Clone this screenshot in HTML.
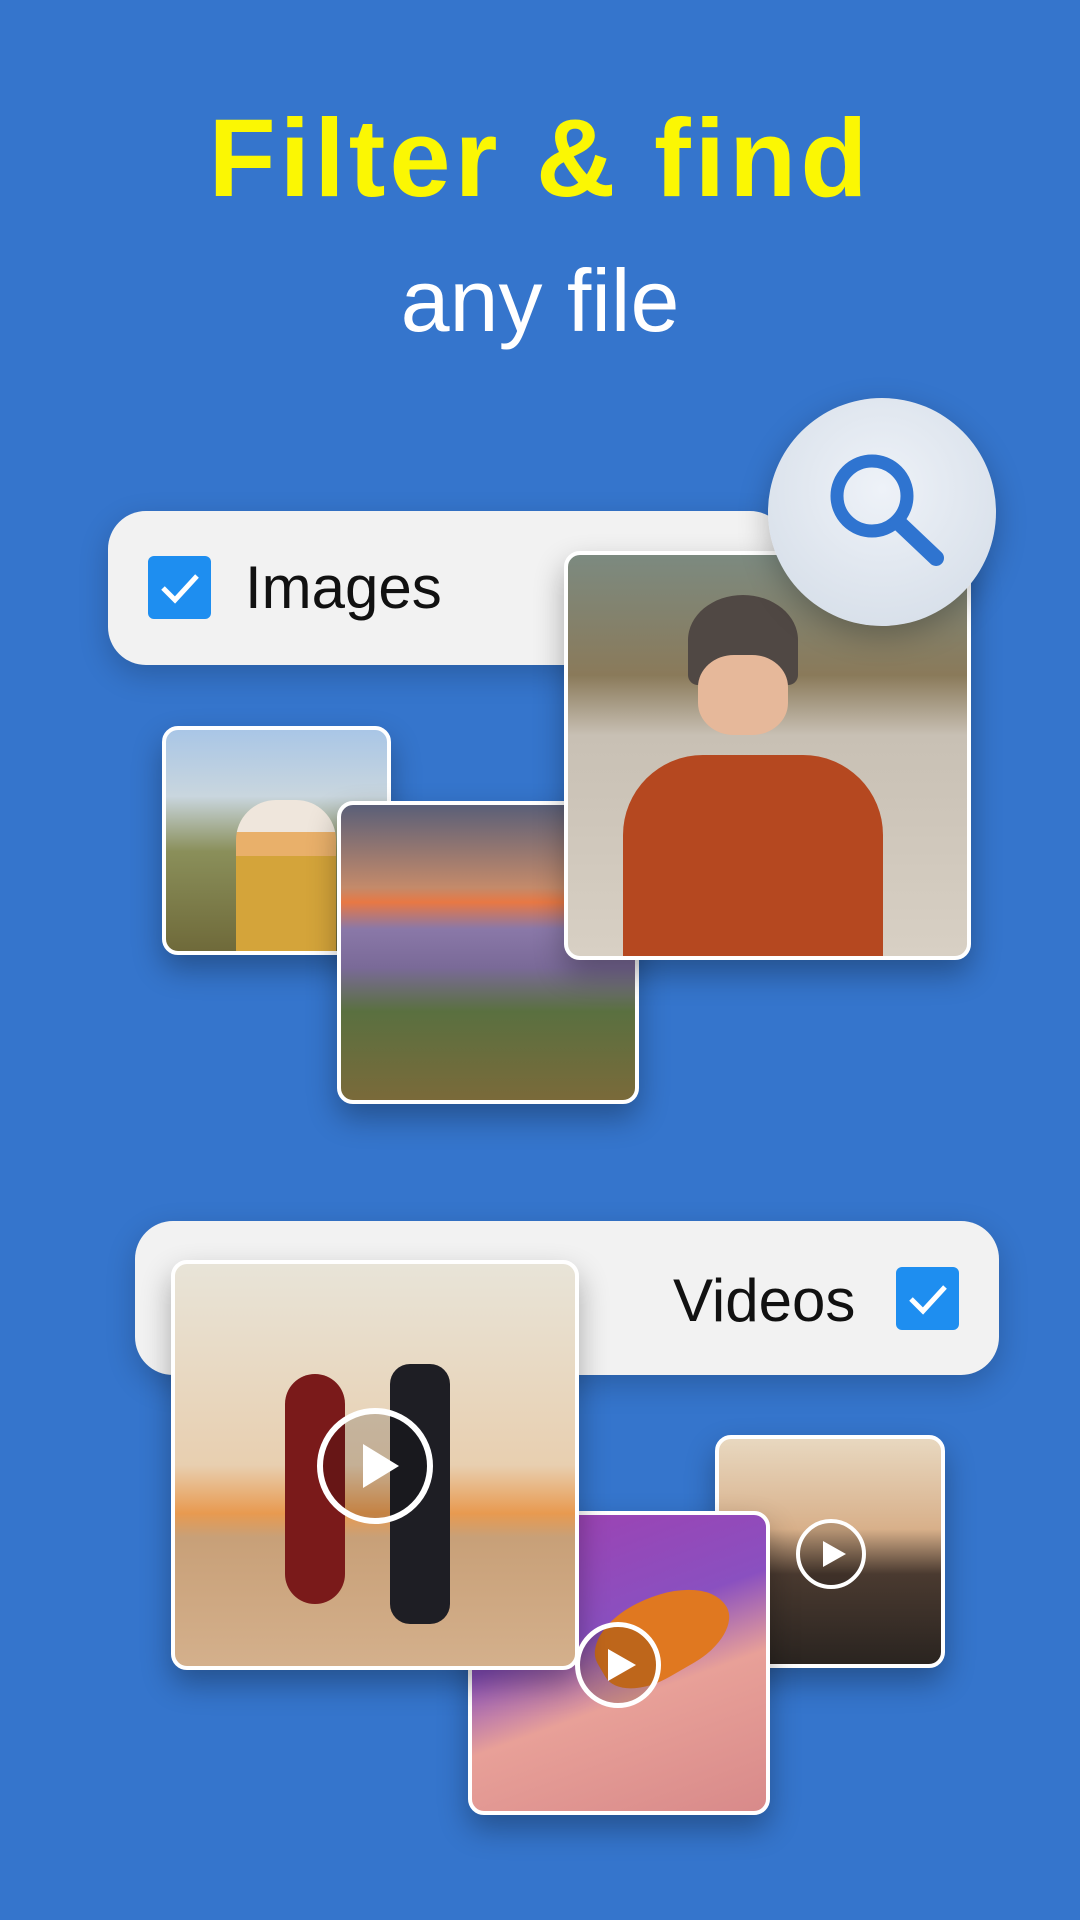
<!DOCTYPE html>
<html><head><meta charset="utf-8"><style>
*{margin:0;padding:0;box-sizing:border-box}
body{width:1080px;height:1920px;background:#3575cc;position:relative;overflow:hidden;font-family:"Liberation Sans",sans-serif}
.abs{position:absolute}
.t1{left:0;width:1080px;top:95px;text-align:center;color:#fbf703;font-size:110px;font-weight:bold;letter-spacing:4px}
.t2{left:0;width:1080px;top:250px;text-align:center;color:#fff;font-size:88px}
.bar{background:#f2f2f2;border-radius:38px;box-shadow:0 10px 30px rgba(0,0,0,.2)}
.cb{background:#1e8ef0;border-radius:6px}
.ph{border:4px solid #fff;border-radius:16px;box-shadow:0 14px 30px rgba(0,0,0,.3);overflow:hidden}
.play{border:6px solid #fff;border-radius:50%;background:rgba(0,0,0,.15)}
.lbl{font-size:60px;color:#111}
</style></head><body>
<div class="abs t1">Filter &amp; find</div>
<div class="abs t2">any file</div>

<div class="abs bar" style="left:108px;top:511px;width:680px;height:154px"></div>
<div class="abs cb" style="left:148px;top:556px;width:63px;height:63px"><svg width="63" height="63"><path d="M15 32 L27 44 L49 20" stroke="#fff" stroke-width="5" fill="none"/></svg></div>
<div class="abs lbl" style="left:245px;top:553px">Images</div>

<div class="abs ph" style="left:162px;top:726px;width:229px;height:229px;background:linear-gradient(180deg,#a9c6e6 0%,#c9d6de 30%,#8a8f5a 55%,#6f6a3a 100%)">
<div class="abs" style="left:70px;top:70px;width:100px;height:160px;border-radius:40px 40px 0 0;background:linear-gradient(#efe6dc 0 20%,#e9b06a 20% 35%,#d4a43a 35%)"></div></div>
<div class="abs ph" style="left:337px;top:801px;width:302px;height:303px;background:linear-gradient(180deg,#5a5f78 0%,#c48a6a 28%,#e87844 33%,#8a78a8 42%,#7a6a98 55%,#5a7040 70%,#7a6a3a 100%)"></div>
<div class="abs ph" style="left:564px;top:551px;width:407px;height:409px;background:linear-gradient(180deg,#7c8a80 0%,#8a7a5a 30%,#c8c0b4 45%,#d8d0c4 100%)">
<div class="abs" style="left:120px;top:40px;width:110px;height:90px;border-radius:50% 50% 10px 10px;background:#504844"></div>
<div class="abs" style="left:130px;top:100px;width:90px;height:80px;border-radius:40%;background:#e6b89a"></div>
<div class="abs" style="left:55px;top:200px;width:260px;height:220px;border-radius:80px 80px 0 0;background:#b54820"></div>
</div>

<div class="abs" style="left:768px;top:398px;width:228px;height:228px;border-radius:50%;background:radial-gradient(circle at 50% 40%,#eef2f8,#d2dbe6);box-shadow:0 10px 30px rgba(0,0,0,.25)">
<svg width="228" height="228"><circle cx="104" cy="98" r="35" stroke="#2f74d0" stroke-width="13" fill="none"/><path d="M130 124 L168 160" stroke="#2f74d0" stroke-width="16" stroke-linecap="round"/></svg></div>

<div class="abs bar" style="left:135px;top:1221px;width:864px;height:154px"></div>
<div class="abs lbl" style="left:673px;top:1266px">Videos</div>
<div class="abs cb" style="left:896px;top:1267px;width:63px;height:63px"><svg width="63" height="63"><path d="M15 32 L27 44 L49 20" stroke="#fff" stroke-width="5" fill="none"/></svg></div>

<div class="abs ph" style="left:715px;top:1435px;width:230px;height:233px;background:linear-gradient(180deg,#e8d8c0 0%,#d8b08a 40%,#4a3a30 60%,#2a2420 100%)"></div>
<div class="abs ph" style="left:468px;top:1511px;width:302px;height:304px;background:linear-gradient(160deg,#a040b0 0%,#8a50c0 40%,#e8a098 60%,#d88a8a 100%)">
<div class="abs" style="left:120px;top:80px;width:140px;height:80px;background:#e07820;transform:rotate(-30deg);border-radius:40% 60% 40% 40%"></div></div>
<div class="abs ph" style="left:171px;top:1260px;width:408px;height:410px;background:linear-gradient(180deg,#e8e4d8 0%,#e8cfb0 50%,#e89a50 62%,#c8a078 68%,#d4b08c 100%)">
<div class="abs" style="left:110px;top:110px;width:60px;height:230px;background:#7a1a1a;border-radius:30px"></div>
<div class="abs" style="left:215px;top:100px;width:60px;height:260px;background:#1e1e24;border-radius:20px"></div></div>

<div class="abs play" style="left:317px;top:1408px;width:116px;height:116px"><svg class="abs" style="left:0;top:0" width="104" height="104"><path d="M40 30 L76 52 L40 74Z" fill="#fff"/></svg></div>
<div class="abs play" style="left:575px;top:1622px;width:86px;height:86px;border-width:5px"><svg class="abs" style="left:0;top:0" width="76" height="76"><path d="M28 22 L56 38 L28 54Z" fill="#fff"/></svg></div>
<div class="abs play" style="left:796px;top:1519px;width:70px;height:70px;border-width:4px"><svg class="abs" style="left:0;top:0" width="62" height="62"><path d="M23 18 L46 31 L23 44Z" fill="#fff"/></svg></div>
</body></html>
